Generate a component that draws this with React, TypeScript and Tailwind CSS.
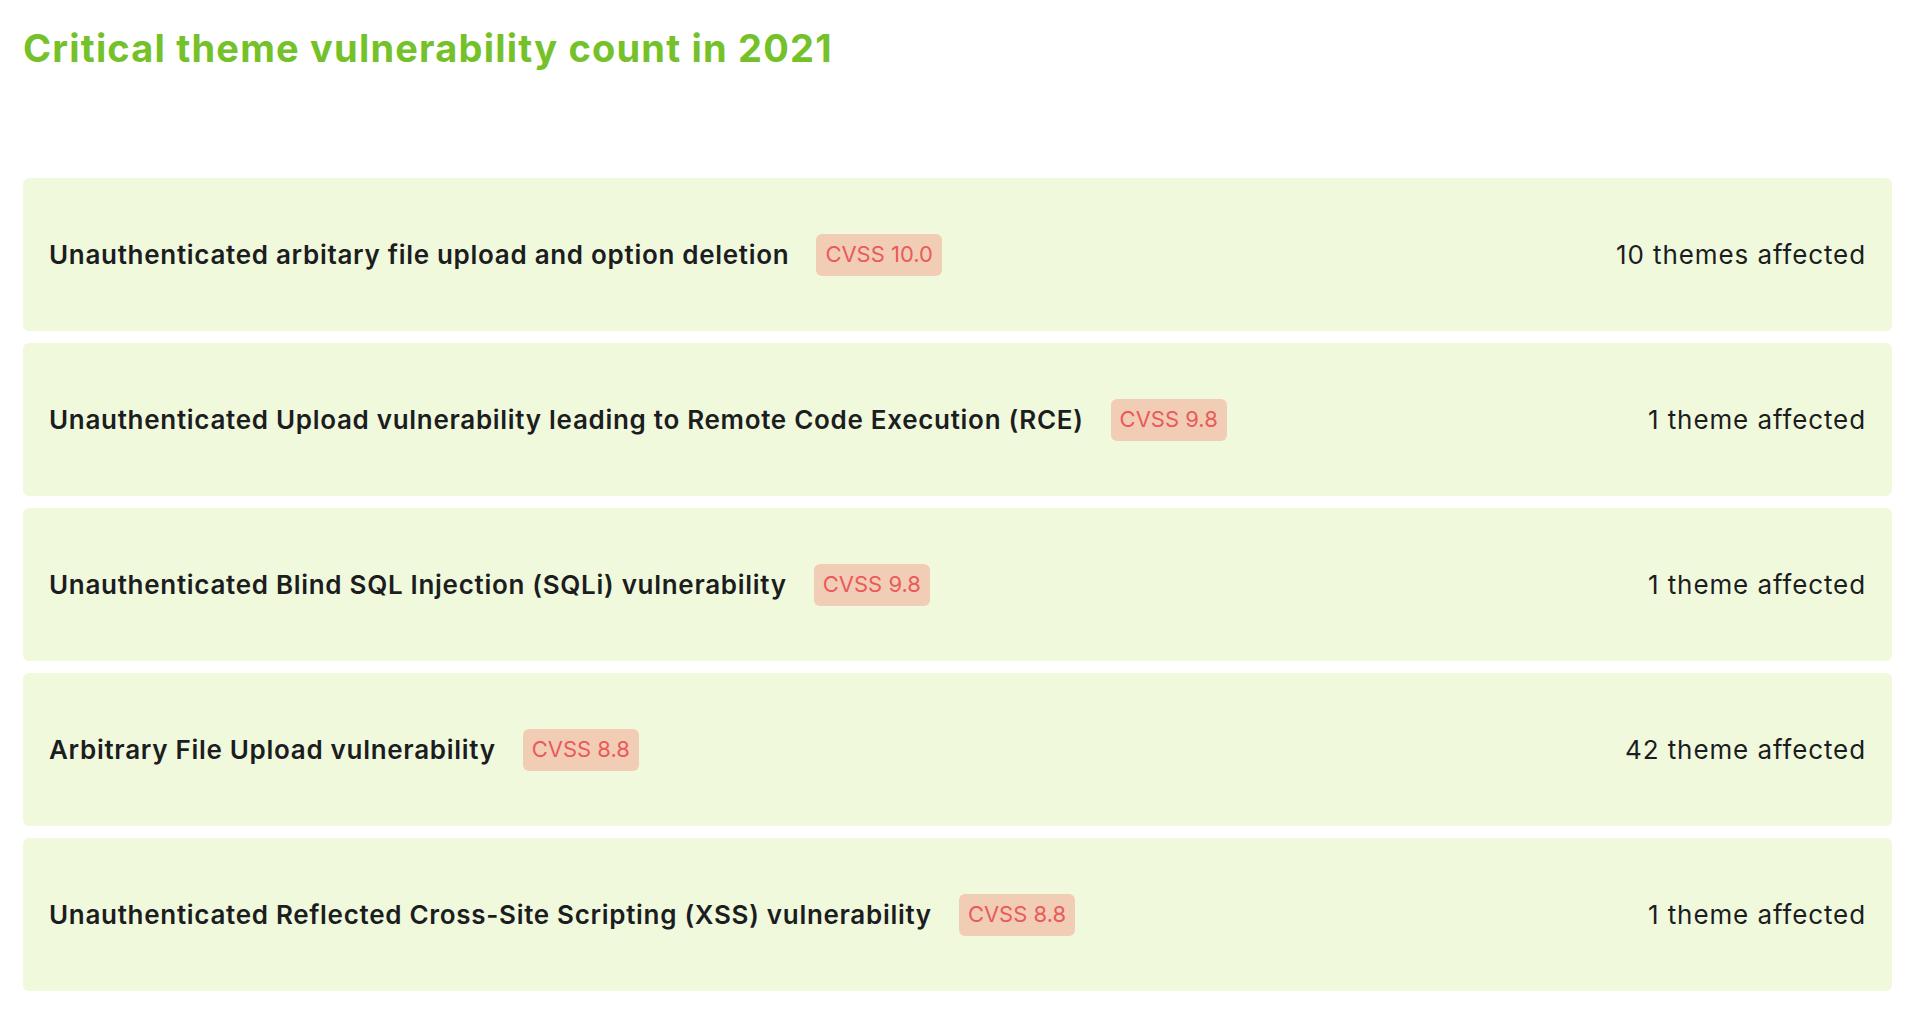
import React from 'react';

// ============================================================================
// DATA
// ============================================================================

interface Vuln {
  title: string;
  cvss: string;
  affected: string;
}

const vulns: Vuln[] = [
  { title: 'Unauthenticated arbitary file upload and option deletion', cvss: 'CVSS 10.0', affected: '10 themes affected' },
  { title: 'Unauthenticated Upload vulnerability leading to Remote Code Execution (RCE)', cvss: 'CVSS 9.8', affected: '1 theme affected' },
  { title: 'Unauthenticated Blind SQL Injection (SQLi) vulnerability', cvss: 'CVSS 9.8', affected: '1 theme affected' },
  { title: 'Arbitrary File Upload vulnerability', cvss: 'CVSS 8.8', affected: '42 theme affected' },
  { title: 'Unauthenticated Reflected Cross-Site Scripting (XSS) vulnerability', cvss: 'CVSS 8.8', affected: '1 theme affected' },
];

// ============================================================================
// ROW
// ============================================================================

function VulnRow({ vuln }: { vuln: Vuln }) {
  return (
    <div className="flex h-[153px] items-center justify-between rounded-md bg-[#f1f9dd] px-[26px]">
      <div className="flex items-center gap-[27px]">
        <span className="text-[26px] font-semibold tracking-[0.7px] text-[#1c1d1f]">{vuln.title}</span>
        <span className="flex h-[42px] items-center rounded-md bg-[#f2cdb6] px-[9px] text-[22px] text-[#ea5a5a]">
          {vuln.cvss}
        </span>
      </div>
      <span className="text-[26px] tracking-[0.9px] text-[#1c1d1f]">{vuln.affected}</span>
    </div>
  );
}

// ============================================================================
// APP
// ============================================================================

export default function App() {
  return (
    <div className="min-h-screen bg-white pl-[23px] pr-[28px] pt-[26px] font-['Inter',sans-serif]">
      <h1 className="text-[38px] font-bold leading-[44px] tracking-[1.2px] text-[#74c12a]">
        Critical theme vulnerability count in 2021
      </h1>
      <div className="mt-[108px] flex flex-col gap-[12px]">
        {vulns.map((v) => (
          <VulnRow key={v.title} vuln={v} />
        ))}
      </div>
    </div>
  );
}
